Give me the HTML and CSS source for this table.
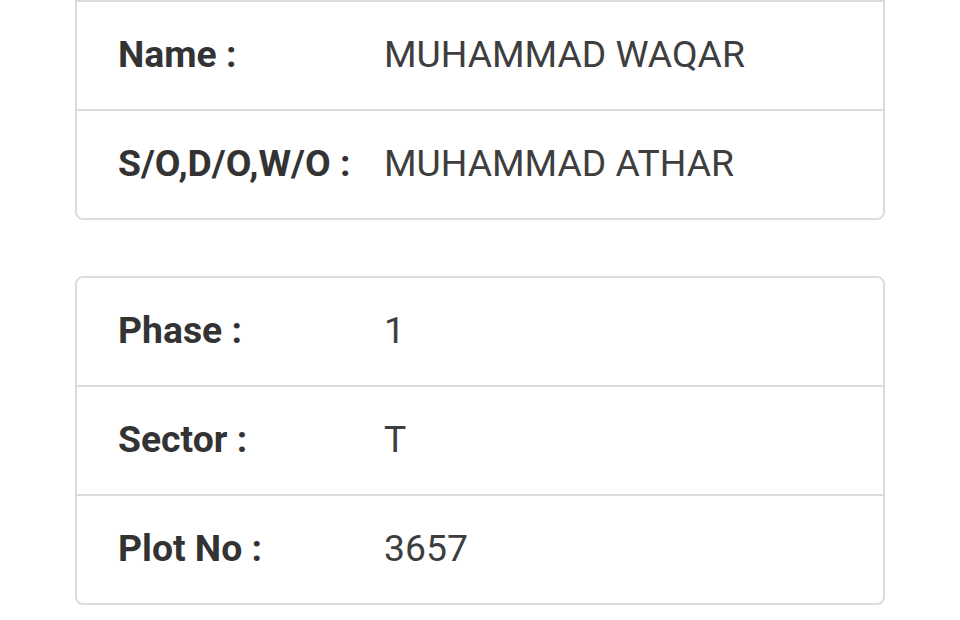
FILE: index.html
```html
<!DOCTYPE html>
<html>
<head>
<meta charset="utf-8">
<link rel="stylesheet" href="styles.css">
</head>
<body>
<div class="page">
  <div class="card card-top">
    <div class="row"><div class="label">Name :</div><div class="value">MUHAMMAD WAQAR</div></div>
    <div class="row"><div class="label">S/O,D/O,W/O :</div><div class="value">MUHAMMAD ATHAR</div></div>
  </div>
  <div class="card">
    <div class="row"><div class="label">Phase :</div><div class="value">1</div></div>
    <div class="row"><div class="label">Sector :</div><div class="value">T</div></div>
    <div class="row"><div class="label">Plot No :</div><div class="value">3657</div></div>
  </div>
</div>
</body>
</html>
```
FILE: styles.css
```css
html, body {
  margin: 0;
  padding: 0;
  background: #ffffff;
}
body {
  font-family: Roboto, "Liberation Sans", sans-serif;
}
.page {
  width: 960px;
  height: 620px;
  overflow: hidden;
  padding-left: 75px;
  box-sizing: border-box;
  display: flex;
  flex-direction: column;
  gap: 56px;
}
.card {
  width: 810px;
  box-sizing: border-box;
  border: 2px solid #dcdcdc;
  border-radius: 8px;
  background: #fff;
  display: flex;
  flex-direction: column;
}
.card-top {
  border-top-left-radius: 0;
  border-top-right-radius: 0;
}
.row {
  height: 107px;
  display: flex;
  align-items: center;
  padding-left: 41px;
  box-sizing: border-box;
}
.row + .row {
  border-top: 2px solid #dcdcdc;
  height: 109px;
}
.label {
  width: 266px;
  flex: none;
  font-weight: 700;
  font-size: 37.3px;
  color: #333333;
  padding-bottom: 4px;
}
.value {
  font-size: 37.3px;
  color: #3e3e3e;
  padding-bottom: 4px;
}
```
